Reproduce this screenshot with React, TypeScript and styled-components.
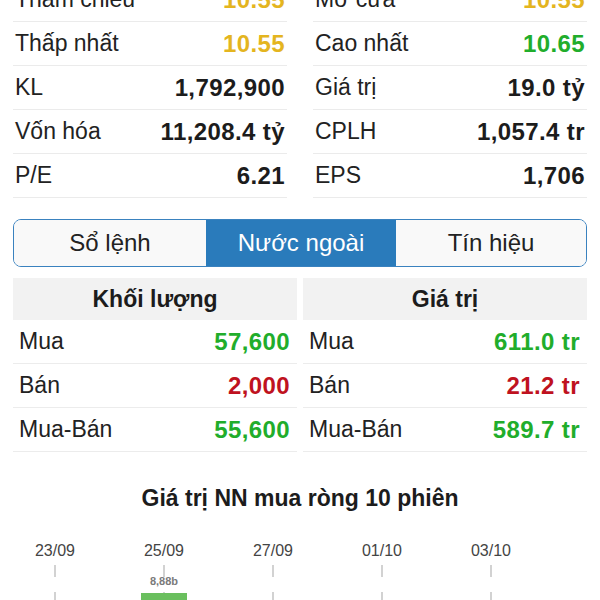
import React from "react";
import styled, { createGlobalStyle } from "styled-components";

const GlobalStyle = createGlobalStyle`
  html, body { margin: 0; padding: 0; background: #ffffff; }
  body { font-family: "Liberation Sans", Arial, sans-serif; color: #1c1c1c; }
  * { box-sizing: border-box; }
`;

const colors = {
  yellow: "#e4b51f",
  green: "#21ad2b",
  red: "#bf1220",
  dark: "#1c1c1c",
};

type Tone = "yellow" | "green" | "red" | "dark";

const Page = styled.div`
  margin-top: -22px;
  padding: 0 13px;
  overflow: hidden;
`;

const StatsGrid = styled.div`
  display: grid;
  grid-template-columns: 1fr 1fr;
  column-gap: 26px;
`;

const StatRow = styled.div`
  height: 44px;
  display: flex;
  align-items: center;
  justify-content: space-between;
  padding: 0 2px;
  border-bottom: 1px solid #ebebeb;
`;

const Label = styled.span`
  font-size: 23px;
  color: #222;
`;

const Value = styled.span<{ $tone: Tone }>`
  font-size: 24px;
  font-weight: 700;
  letter-spacing: 0.4px;
  color: ${(p) => colors[p.$tone]};
`;

const Tabs = styled.div`
  margin-top: 21px;
  height: 48px;
  display: grid;
  grid-template-columns: 192px 190px 1fr;
  border: 1.5px solid #3a82bf;
  border-radius: 8px;
  overflow: hidden;
`;

const Tab = styled.div<{ $active?: boolean }>`
  display: flex;
  align-items: center;
  justify-content: center;
  font-size: 24px;
  background: ${(p) => (p.$active ? "#2a7bbb" : "#f9f9f9")};
  color: ${(p) => (p.$active ? "#ffffff" : "#222")};
`;

const ForeignGrid = styled.div`
  margin-top: 11px;
  display: grid;
  grid-template-columns: 1fr 1fr;
  column-gap: 6px;
`;

const Column = styled.div`
  display: flex;
  flex-direction: column;
`;

const HeaderCell = styled.div`
  height: 42px;
  display: flex;
  align-items: center;
  justify-content: center;
  background: #f2f2f2;
  font-size: 23px;
  font-weight: 700;
  color: #1c1c1c;
`;

const FRow = styled.div`
  height: 44px;
  display: flex;
  align-items: center;
  justify-content: space-between;
  padding: 0 7px 0 6px;
  border-bottom: 1px solid #ececec;
`;

const Title = styled.div`
  margin-top: 32px;
  text-align: center;
  font-size: 23px;
  font-weight: 700;
  line-height: 28px;
  color: #1c1c1c;
`;

const ChartBox = styled.div`
  margin-top: 18px;
  height: 90px;
`;

const stats: [string, string, Tone][][] = [
  [
    ["Tham chiếu", "10.55", "yellow"],
    ["Mở cửa", "10.55", "yellow"],
  ],
  [
    ["Thấp nhất", "10.55", "yellow"],
    ["Cao nhất", "10.65", "green"],
  ],
  [
    ["KL", "1,792,900", "dark"],
    ["Giá trị", "19.0 tỷ", "dark"],
  ],
  [
    ["Vốn hóa", "11,208.4 tỷ", "dark"],
    ["CPLH", "1,057.4 tr", "dark"],
  ],
  [
    ["P/E", "6.21", "dark"],
    ["EPS", "1,706", "dark"],
  ],
];

const volume: [string, string, Tone][] = [
  ["Mua", "57,600", "green"],
  ["Bán", "2,000", "red"],
  ["Mua-Bán", "55,600", "green"],
];

const worth: [string, string, Tone][] = [
  ["Mua", "611.0 tr", "green"],
  ["Bán", "21.2 tr", "red"],
  ["Mua-Bán", "589.7 tr", "green"],
];

const dates = [
  { x: 42, t: "23/09" },
  { x: 151, t: "25/09" },
  { x: 260, t: "27/09" },
  { x: 369, t: "01/10" },
  { x: 478, t: "03/10" },
];

function Chart() {
  return (
    <svg width="574" height="90" viewBox="0 0 574 90">
      {dates.map((d) => (
        <g key={d.t}>
          <text
            x={d.x}
            y={26}
            textAnchor="middle"
            fontFamily="Liberation Sans, Arial, sans-serif"
            fontSize="16"
            fill="#444"
          >
            {d.t}
          </text>
          <line x1={d.x} y1={35} x2={d.x} y2={90} stroke="#b5b5b5" strokeWidth="1.2" strokeDasharray="12 15" />
        </g>
      ))}
      <rect x={128} y={63} width={46} height={40} fill="#6abf5e" />
      <text
        x={151}
        y={55}
        textAnchor="middle"
        fontFamily="Liberation Sans, Arial, sans-serif"
        fontSize="11"
        fontWeight="700"
        fill="#7a7a7a"
      >
        8,88b
      </text>
    </svg>
  );
}

export default function App() {
  return (
    <Page>
      <GlobalStyle />
      <StatsGrid>
        {stats.flat().map(([l, v, t]) => (
          <StatRow key={l}>
            <Label>{l}</Label>
            <Value $tone={t}>{v}</Value>
          </StatRow>
        ))}
      </StatsGrid>
      <Tabs>
        <Tab>Sổ lệnh</Tab>
        <Tab $active>Nước ngoài</Tab>
        <Tab>Tín hiệu</Tab>
      </Tabs>
      <ForeignGrid>
        <Column>
          <HeaderCell>Khối lượng</HeaderCell>
          {volume.map(([l, v, t]) => (
            <FRow key={l}>
              <Label>{l}</Label>
              <Value $tone={t}>{v}</Value>
            </FRow>
          ))}
        </Column>
        <Column>
          <HeaderCell>Giá trị</HeaderCell>
          {worth.map(([l, v, t]) => (
            <FRow key={l}>
              <Label>{l}</Label>
              <Value $tone={t}>{v}</Value>
            </FRow>
          ))}
        </Column>
      </ForeignGrid>
      <Title>Giá trị NN mua ròng 10 phiên</Title>
      <ChartBox>
        <Chart />
      </ChartBox>
    </Page>
  );
}
